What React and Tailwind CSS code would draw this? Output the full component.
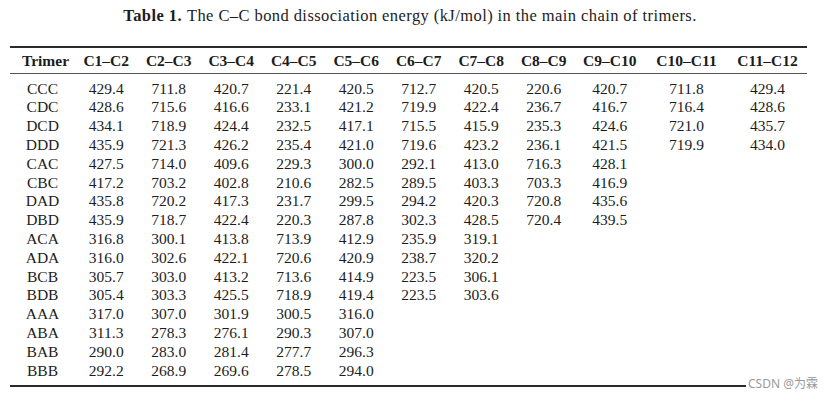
import React from 'react';

const headers = ['Trimer', 'C1–C2', 'C2–C3', 'C3–C4', 'C4–C5', 'C5–C6', 'C6–C7', 'C7–C8', 'C8–C9', 'C9–C10', 'C10–C11', 'C11–C12'];

const rows = [
    ['CCC', '429.4', '711.8', '420.7', '221.4', '420.5', '712.7', '420.5', '220.6', '420.7', '711.8', '429.4'],
    ['CDC', '428.6', '715.6', '416.6', '233.1', '421.2', '719.9', '422.4', '236.7', '416.7', '716.4', '428.6'],
    ['DCD', '434.1', '718.9', '424.4', '232.5', '417.1', '715.5', '415.9', '235.3', '424.6', '721.0', '435.7'],
    ['DDD', '435.9', '721.3', '426.2', '235.4', '421.0', '719.6', '423.2', '236.1', '421.5', '719.9', '434.0'],
    ['CAC', '427.5', '714.0', '409.6', '229.3', '300.0', '292.1', '413.0', '716.3', '428.1'],
    ['CBC', '417.2', '703.2', '402.8', '210.6', '282.5', '289.5', '403.3', '703.3', '416.9'],
    ['DAD', '435.8', '720.2', '417.3', '231.7', '299.5', '294.2', '420.3', '720.8', '435.6'],
    ['DBD', '435.9', '718.7', '422.4', '220.3', '287.8', '302.3', '428.5', '720.4', '439.5'],
    ['ACA', '316.8', '300.1', '413.8', '713.9', '412.9', '235.9', '319.1'],
    ['ADA', '316.0', '302.6', '422.1', '720.6', '420.9', '238.7', '320.2'],
    ['BCB', '305.7', '303.0', '413.2', '713.6', '414.9', '223.5', '306.1'],
    ['BDB', '305.4', '303.3', '425.5', '718.9', '419.4', '223.5', '303.6'],
    ['AAA', '317.0', '307.0', '301.9', '300.5', '316.0'],
    ['ABA', '311.3', '278.3', '276.1', '290.3', '307.0'],
    ['BAB', '290.0', '283.0', '281.4', '277.7', '296.3'],
    ['BBB', '292.2', '268.9', '269.6', '278.5', '294.0'],
];

// column widths measured off the printed table
const cols = 'grid grid-cols-[65px_62.5px_62.5px_62.5px_62.5px_62.5px_62.5px_62.5px_62.5px_69.5px_84px_78px]';

const App = () => {
    return (
        <div className="relative w-[834px] h-[404px] bg-white text-[#1c1c1c] font-['Liberation_Serif',serif] overflow-hidden">
            <div className="h-[32px] flex items-center justify-center pt-[1px] pr-[14px] text-[16.5px] tracking-[0.42px]">
                <span className="font-bold mr-[5px]">Table 1.</span>
                <span>The C–C bond dissociation energy (kJ/mol) in the main chain of trimers.</span>
            </div>

            <div className="ml-[10px] w-[796.5px] mt-[14px] border-t-2 border-b-2 border-[#2a2a2a] text-[15.5px]">
                <div className={`${cols} h-[26px] items-center font-bold border-b border-[#555]`}>
                    {headers.map((h, i) => (
                        <div key={h} className={i === 0 ? 'text-center pl-[6px]' : 'text-center'}>{h}</div>
                    ))}
                </div>

                <div className="pt-[5px] pb-[5px]">
                    {rows.map((r) => (
                        <div key={r[0]} className={`${cols} h-[18.8px] items-center leading-none`}>
                            {r.map((v, i) => (
                                <div key={i} className="text-center">{v}</div>
                            ))}
                        </div>
                    ))}
                </div>
            </div>

            <div className="absolute right-[14px] top-[378px] bg-white px-[2px] text-[12px] leading-none text-[#9a9a9a] font-['Noto_Sans','Noto_Sans_CJK_SC',sans-serif]">
                CSDN @为霖
            </div>
        </div>
    );
};

export default App;
